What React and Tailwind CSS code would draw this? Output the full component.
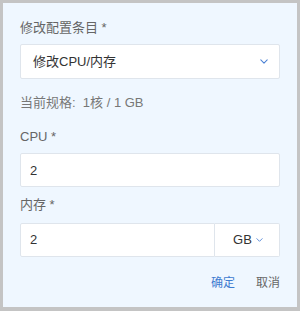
import React, { useState } from "react";

const Chevron = ({ className }) => (
  <svg viewBox="0 0 10 6" className={className} fill="none">
    <path d="M1 1l4 4 4-4" stroke="currentColor" strokeWidth="1.3" strokeLinecap="round" strokeLinejoin="round" />
  </svg>
);

const App = () => {
  const [cpu, setCpu] = useState("2");
  const [mem, setMem] = useState("2");

  return (
    <div className="w-[300px] h-[311px] bg-[#c4c4c4] pt-[3px] px-[3px] pb-[4px] font-['Liberation_Sans','Noto_Sans_CJK_SC',sans-serif]">
      <div className="h-full bg-[#eff7ff] px-[17px] pt-[16px] text-[13px] leading-[18px]">
        <div className="text-[#666]">修改配置条目 *</div>
        <div className="mt-[7px] h-[35px] bg-white border border-[#dfe5ec] rounded-[2px] flex items-center justify-between pl-[12px] pr-[11px] text-[#333]">
          <span>修改CPU/内存</span>
          <Chevron className="w-[8px] h-[5px] text-[#4a80d4]" />
        </div>

        <div className="mt-[15px] text-[#777]">当前规格:&nbsp;&nbsp;1核 / 1 GB</div>

        <div className="mt-[16px] text-[#666]">CPU *</div>
        <input
          value={cpu}
          onChange={(e) => setCpu(e.target.value)}
          className="mt-[7px] block w-full h-[34px] bg-white border border-[#dfe5ec] rounded-[2px] px-[9px] text-[#333] outline-none"
        />

        <div className="mt-[9px] text-[#666]">内存 *</div>
        <div className="mt-[9px] flex h-[34px]">
          <input
            value={mem}
            onChange={(e) => setMem(e.target.value)}
            className="flex-1 min-w-0 bg-white border border-[#dfe5ec] rounded-l-[2px] px-[9px] text-[#333] outline-none"
          />
          <div className="w-[65px] bg-white border border-l-0 border-[#dfe5ec] rounded-r-[2px] flex items-center justify-center gap-[4px] text-[#333] pl-[2px]">
            <span>GB</span>
            <Chevron className="w-[7px] h-[4px] text-[#4a80d4]" />
          </div>
        </div>

        <div className="mt-[17px] flex justify-end gap-[21px] text-[12px]">
          <button className="text-[#3e7bd0]">确定</button>
          <button className="text-[#666]">取消</button>
        </div>
      </div>
    </div>
  );
};

export default App;
